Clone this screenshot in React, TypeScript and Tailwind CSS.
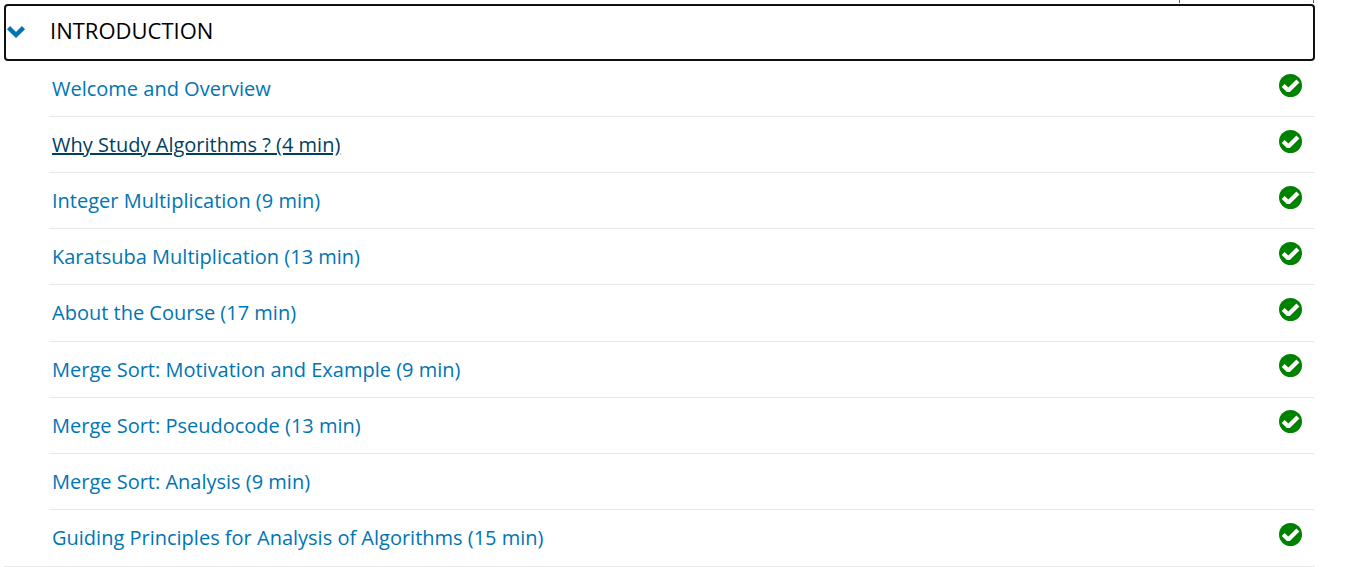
const lessons = [
  { title: "Welcome and Overview", done: true },
  { title: "Why Study Algorithms ? (4 min)", done: true, active: true },
  { title: "Integer Multiplication (9 min)", done: true },
  { title: "Karatsuba Multiplication (13 min)", done: true },
  { title: "About the Course (17 min)", done: true },
  { title: "Merge Sort: Motivation and Example (9 min)", done: true },
  { title: "Merge Sort: Pseudocode (13 min)", done: true },
  { title: "Merge Sort: Analysis (9 min)", done: false },
  { title: "Guiding Principles for Analysis of Algorithms (15 min)", done: true },
];

function CompletedIcon() {
  return (
    <svg viewBox="0 0 23 23" className="mb-2 h-[23px] w-[23px]" role="img" aria-label="Completed">
      <circle cx="11.5" cy="11.5" r="11.5" fill="#008100" />
      <path
        d="M4.2 11.4 9.4 16.4 18.9 6.9"
        fill="none"
        stroke="white"
        strokeWidth="4.2"
        strokeLinejoin="bevel"
      />
    </svg>
  );
}

function ChevronIcon() {
  return (
    <svg viewBox="0 0 20 20" className="mr-6 h-5 w-5 text-[#0075b4]" aria-hidden="true">
      <path d="M2.5 6.7 10 14l7.5-7.3" fill="none" stroke="currentColor" strokeWidth="4.4" />
    </svg>
  );
}

export default function App() {
  return (
    <main className="bg-white pr-[31px] pl-1 font-['Open_Sans',sans-serif]">
      <div className="flex h-1 justify-end">
        <div className="mr-px h-[3px] w-[135px] border-x border-[#0075b4]" />
      </div>
      <section className="border-b border-[#e7e7e7]">
        <h2>
          <button
            type="button"
            aria-expanded="true"
            aria-controls="introduction-lessons"
            className="flex h-[57px] w-full items-center rounded-sm border-2 border-[#111111] pb-1 text-left text-[22px] text-black"
          >
            <ChevronIcon />
            INTRODUCTION
          </button>
        </h2>
        <ol
          id="introduction-lessons"
          className="mr-px ml-[45px] grid min-h-[505px] auto-rows-fr divide-y divide-[#e7e7e7]"
        >
          {lessons.map((lesson) => (
            <li key={lesson.title} className="flex items-center justify-between pt-px pr-3 pl-[3px]">
              <a
                href="#"
                className={
                  lesson.active
                    ? "text-xl text-[#003f61] underline"
                    : "text-xl text-[#0075b4]"
                }
              >
                {lesson.title}
              </a>
              {lesson.done && <CompletedIcon />}
            </li>
          ))}
        </ol>
      </section>
    </main>
  );
}
